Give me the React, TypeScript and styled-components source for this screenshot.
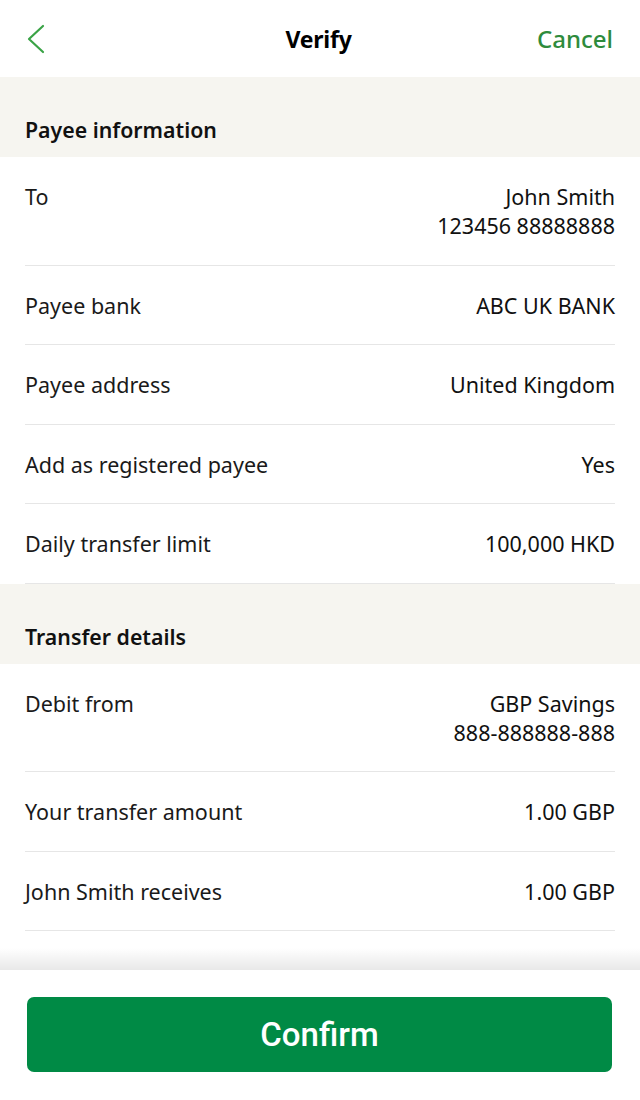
import React from "react";
import styled, { createGlobalStyle } from "styled-components";

const Global = createGlobalStyle`
  html, body { margin: 0; padding: 0; background: #fff; }
  body { font-family: "Noto Sans", "Open Sans", sans-serif; color: #111; }
  * { box-sizing: border-box; }
`;

const Screen = styled.div`
  width: 640px;
  height: 1100px;
  display: flex;
  flex-direction: column;
  background: #fff;
  overflow: hidden;
`;

const Header = styled.header`
  height: 77px;
  flex: 0 0 77px;
  display: grid;
  grid-template-columns: 1fr auto 1fr;
  align-items: center;
  padding: 0 27px 0 24px;
`;

const BackButton = styled.button`
  justify-self: start;
  background: none;
  border: none;
  padding: 0;
  width: 30px;
  height: 40px;
  display: flex;
  align-items: center;
  cursor: pointer;
`;

const Title = styled.h1`
  margin: 0;
  font-size: 23px;
  font-weight: 700;
  color: #000;
  letter-spacing: -0.2px;
`;

const CancelLink = styled.a`
  justify-self: end;
  font-size: 24px;
  font-weight: 500;
  color: #2e8b3c;
  text-decoration: none;
`;

const Scroll = styled.main`
  flex: 1 1 auto;
  overflow: hidden;
`;

const SectionTitle = styled.h2`
  margin: 0;
  height: 80px;
  padding: 38px 25px 0;
  background: #f6f5f0;
  font-size: 21.3px;
  line-height: 29px;
  font-weight: 600;
  color: #111;
`;

const List = styled.div`
  padding: 0 25px;
`;

const Row = styled.div`
  display: flex;
  justify-content: space-between;
  align-items: flex-start;
  padding: 25px 0 24.5px;
  border-bottom: 1px solid #e6e6e6;
  font-size: 21.5px;
  line-height: 29px;
`;

const Label = styled.span`
  color: #1a1a1a;
`;

const Value = styled.span`
  text-align: right;
  color: #111;
  white-space: pre-line;
`;

const Footer = styled.footer`
  position: relative;
  flex: 0 0 130px;
  background: #fff;
  padding: 27px 28px 0 27px;
  &::before {
    content: "";
    position: absolute;
    left: 0;
    right: 0;
    bottom: 100%;
    height: 22px;
    background: linear-gradient(to bottom, rgba(0,0,0,0), rgba(0,0,0,0.09));
  }
`;

const ConfirmButton = styled.button`
  width: 100%;
  height: 75px;
  border: none;
  border-radius: 7px;
  background: #008a45;
  color: #fff;
  font-family: Roboto, "Noto Sans", sans-serif;
  font-size: 33px;
  font-weight: 500;
  cursor: pointer;
`;

const payee = [
  ["To", "John Smith\n123456 88888888"],
  ["Payee bank", "ABC UK BANK"],
  ["Payee address", "United Kingdom"],
  ["Add as registered payee", "Yes"],
  ["Daily transfer limit", "100,000 HKD"],
];

const transfer = [
  ["Debit from", "GBP Savings\n888-888888-888"],
  ["Your transfer amount", "1.00 GBP"],
  ["John Smith receives", "1.00 GBP"],
];

export default function App() {
  return (
    <>
      <Global />
      <Screen>
        <Header>
          <BackButton aria-label="Back">
            <svg width="22" height="32" viewBox="0 0 22 32" fill="none">
              <path d="M19 3 L5 16 L19 29" stroke="#3aa346" strokeWidth="2.2" strokeLinecap="round" strokeLinejoin="round" />
            </svg>
          </BackButton>
          <Title>Verify</Title>
          <CancelLink href="#">Cancel</CancelLink>
        </Header>
        <Scroll>
          <SectionTitle>Payee information</SectionTitle>
          <List>
            {payee.map(([l, v]) => (
              <Row key={l}>
                <Label>{l}</Label>
                <Value>{v}</Value>
              </Row>
            ))}
          </List>
          <SectionTitle>Transfer details</SectionTitle>
          <List>
            {transfer.map(([l, v]) => (
              <Row key={l}>
                <Label>{l}</Label>
                <Value>{v}</Value>
              </Row>
            ))}
          </List>
        </Scroll>
        <Footer>
          <ConfirmButton>Confirm</ConfirmButton>
        </Footer>
      </Screen>
    </>
  );
}
